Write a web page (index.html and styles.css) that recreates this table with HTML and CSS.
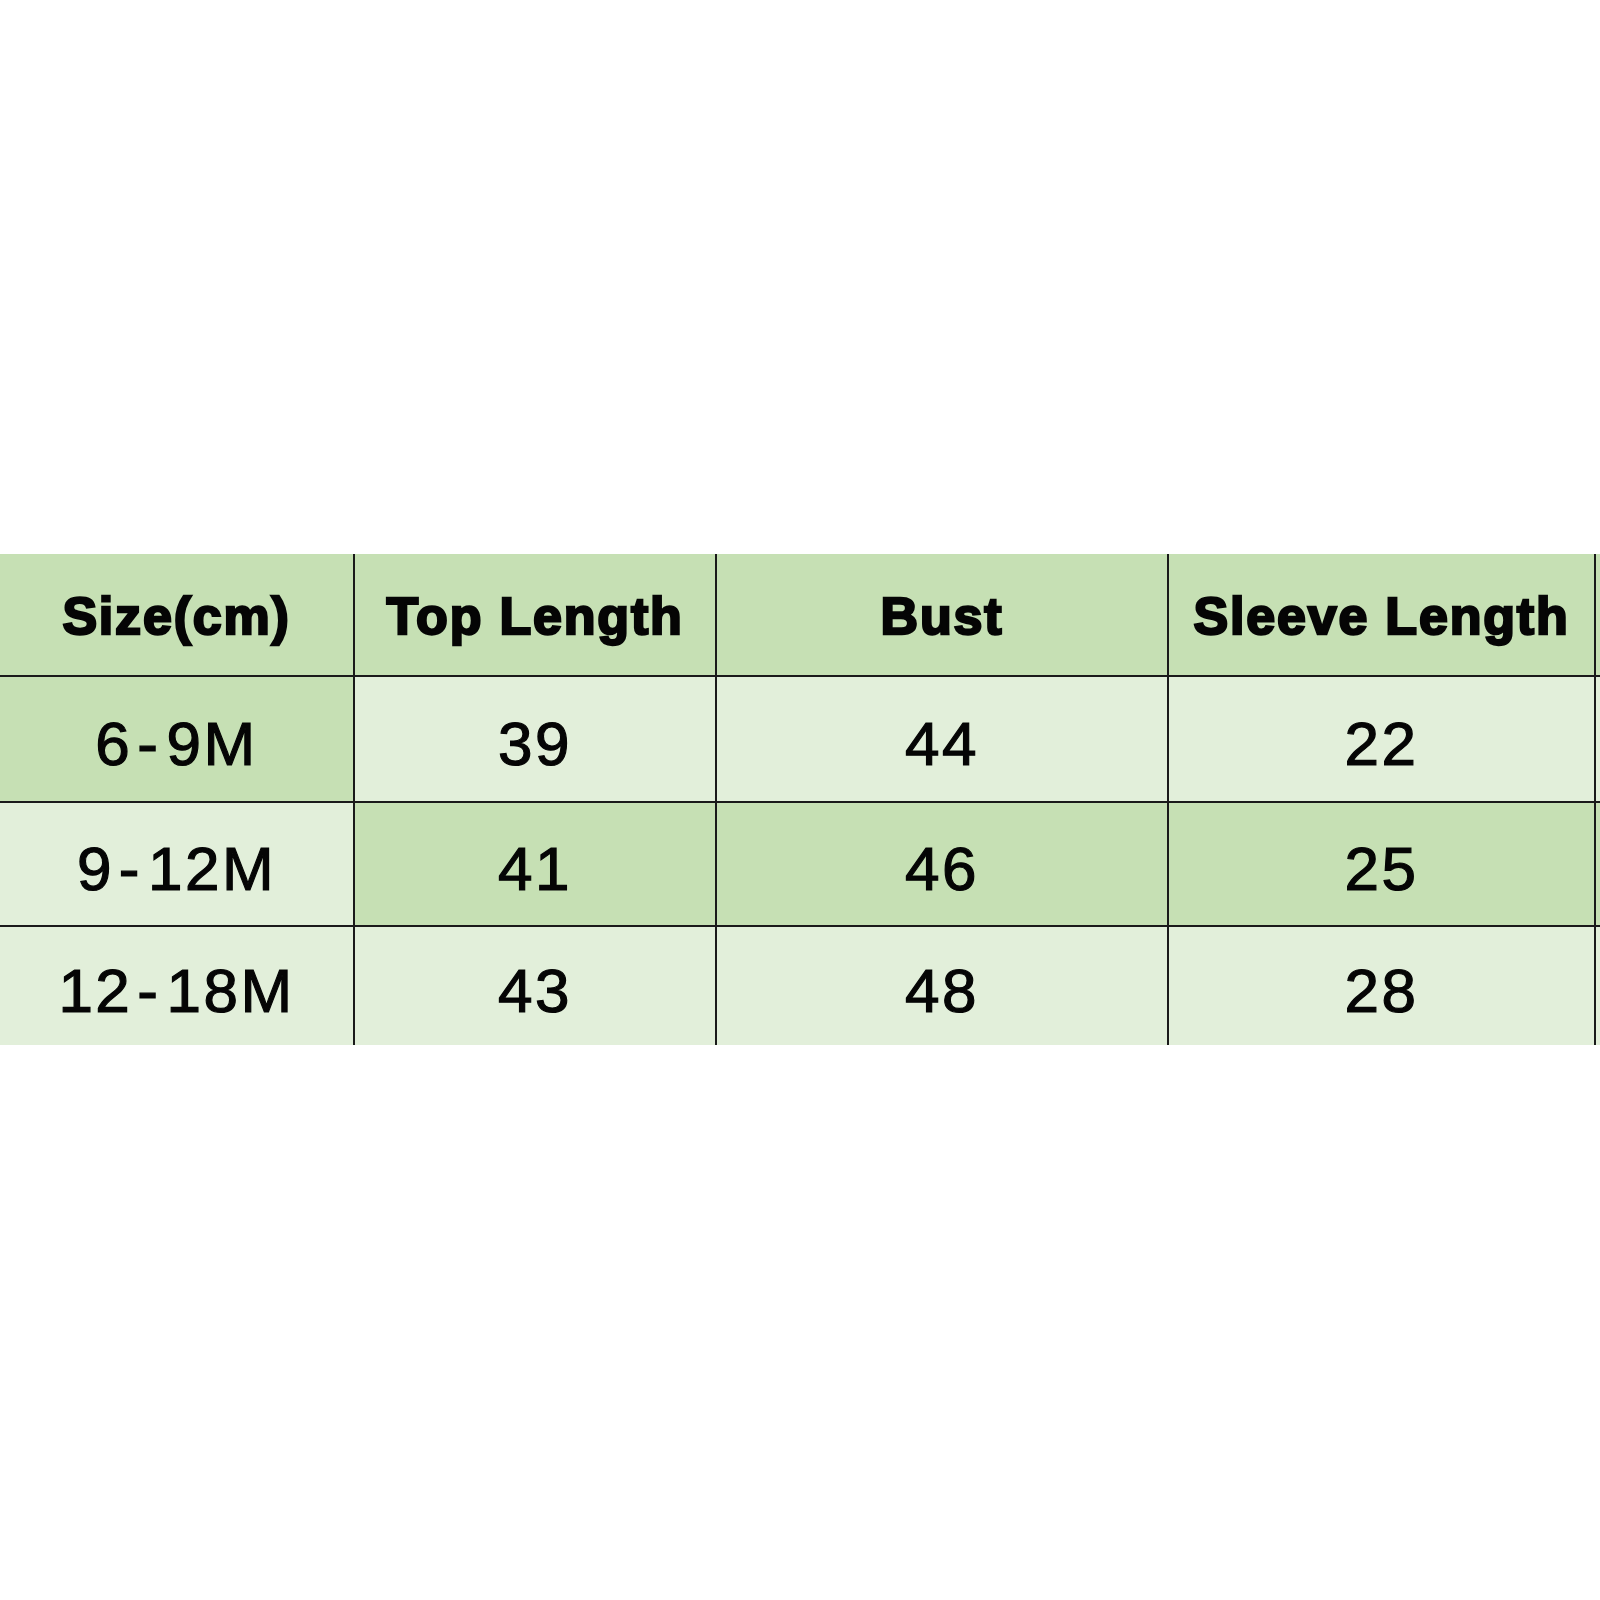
FILE: index.html
```html
<!DOCTYPE html>
<html>
<head>
<meta charset="utf-8">
<link rel="stylesheet" href="styles.css">
</head>
<body>
<div class="sheet">
  <div class="cell head">Size(cm)</div>
  <div class="cell head">Top Length</div>
  <div class="cell head">Bust</div>
  <div class="cell head">Sleeve Length</div>
  <div class="cell dark"></div>

  <div class="cell val dark">6<span class="dash">-</span>9M</div>
  <div class="cell val light">39</div>
  <div class="cell val light">44</div>
  <div class="cell val light">22</div>
  <div class="cell light"></div>

  <div class="cell val light">9<span class="dash">-</span>12M</div>
  <div class="cell val dark">41</div>
  <div class="cell val dark">46</div>
  <div class="cell val dark">25</div>
  <div class="cell dark"></div>

  <div class="cell val light">12<span class="dash">-</span>18M</div>
  <div class="cell val light">43</div>
  <div class="cell val light">48</div>
  <div class="cell val light">28</div>
  <div class="cell light"></div>
</div>
</body>
</html>
```
FILE: styles.css
```css
html, body {
  margin: 0;
  padding: 0;
  background: #ffffff;
}
body {
  width: 1600px;
  height: 1600px;
  font-family: "Liberation Sans", Arial, sans-serif;
  color: #050505;
}
.sheet {
  margin-top: 554px;
  display: grid;
  grid-template-columns: 353px 360px 450px 425px 4px;
  grid-template-rows: 121px 124px 122px 118px;
  gap: 2px;
  background: #1a1a1a;
  width: 1600px;
}
.cell {
  display: flex;
  align-items: center;
  justify-content: center;
  white-space: nowrap;
  overflow: hidden;
}
.head {
  background: #c6e0b4;
  font-weight: 700;
  font-size: 52px;
  letter-spacing: 1.8px;
  -webkit-text-stroke: 2.4px #050505;
  padding-top: 2px;
  box-sizing: border-box;
}
.dark {
  background: #c6e0b4;
}
.light {
  background: #e2efda;
}
.val {
  font-size: 62px;
  letter-spacing: 2.5px;
  -webkit-text-stroke: 1.2px #050505;
  padding-top: 8px;
  box-sizing: border-box;
}
.dash {
  margin: 0 6px 0 5px;
}
```
